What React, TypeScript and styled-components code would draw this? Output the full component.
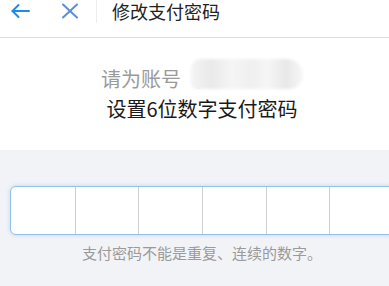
import styled, { createGlobalStyle } from "styled-components";

const GlobalStyle = createGlobalStyle`
  html, body {
    margin: 0;
    padding: 0;
    background: #f2f3f7;
    overflow: hidden;
  }
  body {
    font-family: "Noto Sans CJK SC", "Noto Sans", sans-serif;
  }
`;

const Page = styled.div`
  width: 404px;
  min-height: 286px;
  background: #f2f3f7;
`;

const Header = styled.header`
  height: 37px;
  display: flex;
  align-items: flex-start;
  background: #fff;
  border-bottom: 1px solid #dcdcdc;
`;

const IconButton = styled.button<{ $color: string; $left: number }>`
  display: flex;
  padding: 0;
  margin: 3px 0 0 ${({ $left }) => $left}px;
  border: none;
  background: none;
  color: ${({ $color }) => $color};
  cursor: pointer;
`;

const Divider = styled.div`
  width: 1px;
  height: 23px;
  margin-left: 17px;
  background: #ececec;
`;

const Title = styled.h1`
  margin: 0 0 0 15px;
  font-size: 18px;
  line-height: 22px;
  font-weight: 400;
  color: #222;
`;

const Intro = styled.section`
  height: 112px;
  box-sizing: border-box;
  padding-top: 26px;
  background: #fff;
  text-align: center;
  font-size: 20px;
  line-height: 30px;
`;

const Line = styled.div<{ $muted?: boolean }>`
  color: ${({ $muted }) => ($muted ? "#9a9a9a" : "#1a1a1a")};
  white-space: nowrap;
`;

const Paren = styled.span`
  color: #d4d4d4;
`;

const Masked = styled.span`
  display: inline-block;
  width: 112px;
  height: 30px;
  margin-left: -10px;
  vertical-align: top;
  margin-top: -5px;
  border-radius: 14px 24px 20px 8px;
  background: linear-gradient(
    to right,
    #f4f4f4 0%,
    #e9e9e9 18%,
    #f5f5f5 36%,
    #efefef 55%,
    #f6f6f6 68%,
    #e8e8e8 85%,
    #f7f7f7 100%
  );
  filter: blur(1.5px);
`;

const Entry = styled.section`
  padding: 36px 10px 0;
  text-align: center;
`;

const CodeBox = styled.div`
  display: grid;
  grid-template-columns: repeat(6, 1fr);
  height: 49px;
  box-sizing: border-box;
  border: 1px solid #93c1ec;
  border-radius: 6px;
  background: #fff;
  box-shadow: 0 0 4px rgba(110, 165, 230, 0.4);
  overflow: hidden;
`;

const Cell = styled.div`
  & + & {
    border-left: 1px solid #cfcfcf;
  }
`;

const Hint = styled.p`
  margin: 7px 0 0;
  font-size: 15px;
  line-height: 22px;
  color: #9a9a9a;
`;

export default function App() {
  return (
    <>
      <GlobalStyle />
      <Page>
        <Header>
          <IconButton $color="#1d8ce9" $left={10} aria-label="返回">
            <svg width="20" height="16" viewBox="0 0 20 16" fill="none" stroke="currentColor" strokeWidth="2" strokeLinecap="round" strokeLinejoin="round">
              <path d="M19 8H2.5" />
              <path d="M8.5 2L2.5 8l6 6" />
            </svg>
          </IconButton>
          <IconButton $color="#5a8fd8" $left={31} aria-label="关闭">
            <svg width="18" height="16" viewBox="0 0 18 16" fill="none" stroke="currentColor" strokeWidth="2" strokeLinecap="round">
              <path d="M2 1.5L16 14.5" />
              <path d="M16 1.5L2 14.5" />
            </svg>
          </IconButton>
          <Divider />
          <Title>修改支付密码</Title>
        </Header>
        <Intro>
          <Line $muted>
            请为账号<Paren>（</Paren>
            <Masked />
          </Line>
          <Line>设置6位数字支付密码</Line>
        </Intro>
        <Entry>
          <CodeBox>
            {Array.from({ length: 6 }).map((_, i) => (
              <Cell key={i} />
            ))}
          </CodeBox>
          <Hint>支付密码不能是重复、连续的数字。</Hint>
        </Entry>
      </Page>
    </>
  );
}
